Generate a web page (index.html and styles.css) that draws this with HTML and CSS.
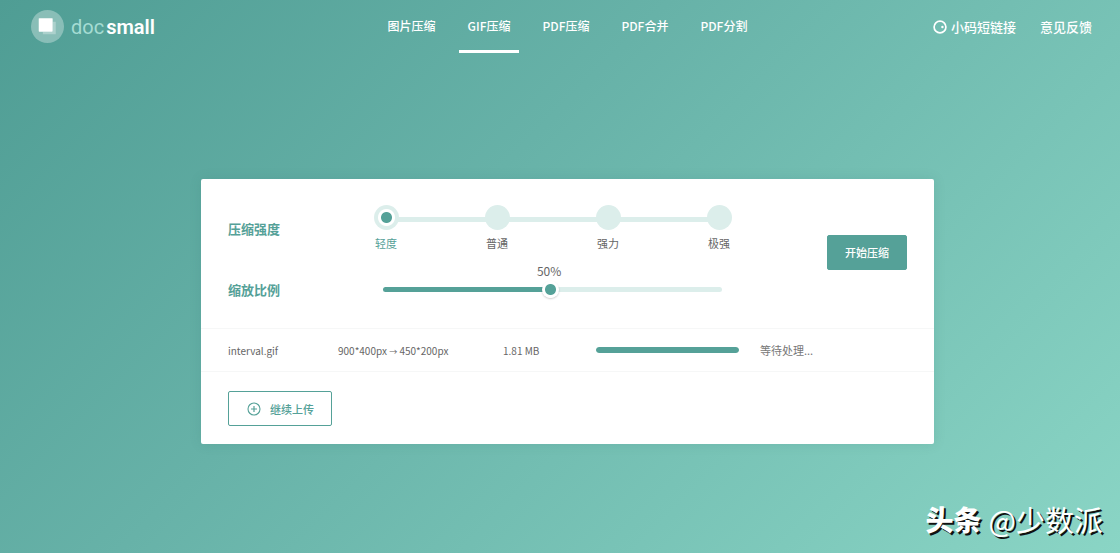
FILE: index.html
```html
<!DOCTYPE html>
<html lang="zh-CN">
<head>
<meta charset="utf-8">
<meta name="viewport" content="width=device-width, initial-scale=1">
<title>docsmall</title>
<link rel="stylesheet" href="styles.css">
</head>
<body class="page">
<header class="header">
  <a class="logo" href="#">
    <svg class="logo-mark" viewBox="0 0 32 32" aria-hidden="true">
      <circle cx="16" cy="16" r="16" fill="#fff" fill-opacity=".32"/>
      <path d="M21 11.500h3v12H11.500V21H21z" fill="#fff" fill-opacity=".3"/>
      <rect x="7.500" y="8" width="13.500" height="13" rx=".6" fill="#fff"/>
    </svg>
    <span class="logo-text"><span class="logo-doc">doc</span><span class="logo-small">small</span></span>
  </a>
  <nav class="nav">
    <a class="nav-link" href="#">图片压缩</a>
    <a class="nav-link nav-link-active" href="#" aria-current="page">GIF压缩</a>
    <a class="nav-link" href="#">PDF压缩</a>
    <a class="nav-link" href="#">PDF合并</a>
    <a class="nav-link" href="#">PDF分割</a>
  </nav>
  <div class="links">
    <a class="link" href="#">
      <svg class="link-icon" viewBox="0 0 14 14" aria-hidden="true">
        <circle cx="7" cy="7" r="5.900" fill="none" stroke="#fff" stroke-width="1.700"/>
        <circle cx="9.400" cy="7" r="1.200" fill="#fff"/>
      </svg>小码短链接</a>
    <a class="link" href="#">意见反馈</a>
  </div>
</header>
<main class="main">
  <section class="card">
    <form class="settings">
      <div class="fields">
        <span class="field-name" id="level-name">压缩强度</span>
        <div class="steps" role="radiogroup" aria-labelledby="level-name">
          <label class="step"><input class="step-dot" type="radio" name="level" checked><span class="step-text">轻度</span></label>
          <label class="step"><input class="step-dot" type="radio" name="level"><span class="step-text">普通</span></label>
          <label class="step"><input class="step-dot" type="radio" name="level"><span class="step-text">强力</span></label>
          <label class="step"><input class="step-dot" type="radio" name="level"><span class="step-text">极强</span></label>
        </div>
        <label class="field-name field-name-low" for="scale">缩放比例</label>
        <div class="scale">
          <output class="scale-value" for="scale">50%</output>
          <input class="range" id="scale" type="range" min="1" max="100" value="50">
        </div>
      </div>
      <button class="button button-main" type="button">开始压缩</button>
    </form>
    <table class="files">
      <colgroup><col class="col-name"><col class="col-size"><col class="col-weight"><col class="col-progress"><col></colgroup>
      <tbody>
        <tr>
          <td class="cell cell-first">interval.gif</td>
          <td class="cell">900*400px <span class="arrow">→</span> 450*200px</td>
          <td class="cell">1.81 MB</td>
          <td class="cell"><progress class="progress" value="100" max="100" aria-label="interval.gif"></progress></td>
          <td class="cell cell-state">等待处理...</td>
        </tr>
      </tbody>
    </table>
    <div class="footer">
      <button class="button button-outline" type="button">
        <svg class="plus" viewBox="0 0 14 14" aria-hidden="true">
          <path d="M7 4v6M4 7h6" stroke="currentColor" stroke-width="1.200" fill="none"/>
          <circle cx="7" cy="7" r="6" stroke="currentColor" stroke-width="1.100" fill="none"/>
        </svg>继续上传</button>
    </div>
  </section>
</main>
<div class="mark"><b class="mark-brand">头条</b><span>@少数派</span></div>
</body>
</html>
```
FILE: styles.css
```css
* { box-sizing: border-box; }

.page {
  --green: #55a198;
  --pale: #dceeeb;
  margin: 0;
  min-height: 100vh;
  position: relative;
  background: linear-gradient(135deg, #4f9d94 0%, #67b2a8 40%, #8ad5c5 100%);
  font-family: "Noto Sans CJK SC", sans-serif;
  font-size: 11px;
  color: #666;
}

.header {
  display: grid;
  grid-template-columns: 349fr auto 337fr;
  padding: 0 28px 0 31px;
  font-size: 13px;
  font-weight: 500;
}

.logo {
  display: flex;
  align-items: center;
  gap: 7px;
  justify-self: start;
  text-decoration: none;
  color: #fff;
}

.logo-mark { width: 33px; height: 33px; }

.logo-text {
  display: flex;
  gap: 2px;
  font: 600 20px/24px Roboto, sans-serif;
}

.logo-doc { font-weight: 400; color: #a5dcd3; }

.nav { display: flex; gap: 14px; font-size: 12px; }

.nav-link {
  padding: 16px 9px 14px;
  line-height: 20px;
  border-bottom: 3px solid transparent;
  color: #fff;
  text-decoration: none;
}

.nav-link-active { border-color: #fff; }

.links {
  display: flex;
  justify-content: flex-end;
  align-items: center;
  gap: 24px;
}

.link {
  display: flex;
  align-items: center;
  gap: 4px;
  color: #fff;
  line-height: 20px;
  text-decoration: none;
}

.link-icon { width: 14px; height: 14px; }

.main {
  display: grid;
  grid-template-columns: 201fr 733fr 186fr;
  padding: 126px 0 109px;
}

.card {
  grid-column: 2;
  background: #fff;
  border-radius: 2px;
  box-shadow: 0 0 12px rgba(50, 110, 100, .15);
}

.settings {
  display: flex;
  align-items: center;
  justify-content: space-between;
  padding: 26px 27px 29px;
}

.fields {
  display: grid;
  grid-template-columns: 145px 359px;
  row-gap: 9px;
  align-items: center;
}

.field-name {
  font-size: 13px;
  line-height: 18px;
  font-weight: 700;
  color: var(--green);
}

.field-name-low { align-self: end; }

.steps {
  display: flex;
  justify-content: space-between;
  background: linear-gradient(var(--pale), var(--pale)) center 12px / 330px 5px no-repeat;
}

.step {
  display: grid;
  justify-items: center;
  gap: 3px;
  width: 26px;
}

.step-dot {
  appearance: none;
  margin: 0;
  width: 25px;
  height: 25px;
  border-radius: 50%;
  background: var(--pale);
}

.step-dot:checked {
  background: radial-gradient(circle, var(--green) 5px, #fff 6px, #fff 8px, var(--pale) 9px);
}

.step-text { line-height: 20px; white-space: nowrap; }
.step-dot:checked + .step-text { color: var(--green); }

.scale {
  display: grid;
  padding: 0 10px;
}

.scale-value {
  width: 98%;
  text-align: center;
  font-size: 12px;
  line-height: 18px;
}

.range {
  appearance: none;
  margin: 0;
  width: 100%;
  height: 19px;
  background: none;
}

.range::-webkit-slider-runnable-track {
  height: 5px;
  border-radius: 3px;
  background: linear-gradient(90deg, var(--green) 49%, var(--pale) 49%);
}

.range::-webkit-slider-thumb {
  appearance: none;
  width: 17px;
  height: 17px;
  margin-top: -6px;
  border-radius: 50%;
  background: radial-gradient(circle, var(--green) 5px, #fff 6px);
  box-shadow: 0 1px 2px rgba(0, 0, 0, .2);
}

.button {
  display: flex;
  align-items: center;
  justify-content: center;
  height: 35px;
  border: 1px solid var(--green);
  border-radius: 2px;
  font: 500 11px/20px "Noto Sans CJK SC", sans-serif;
}

.button-main {
  padding: 0 17px;
  background: var(--green);
  color: #fff;
}

.button-outline {
  gap: 9px;
  padding: 0 17px 0 18px;
  background: #fff;
  color: var(--green);
}

.plus { width: 14px; height: 14px; }

.files {
  width: 100%;
  table-layout: fixed;
  border-collapse: collapse;
  border-top: 1px solid #f6f7f7;
  border-bottom: 1px solid #f6f7f7;
}

.col-name { width: 137px; }
.col-size { width: 165px; }
.col-weight { width: 93px; }
.col-progress { width: 164px; }

.cell {
  height: 43px;
  padding: 0;
  font-size: 10px;
  white-space: nowrap;
}

.cell-first { padding-left: 27px; }
.cell-state { font-size: 11px; color: #777; }
.arrow { font-size: 8px; }

.progress {
  display: block;
  appearance: none;
  width: 143px;
  height: 6px;
  border-radius: 3px;
  overflow: hidden;
}

.progress::-webkit-progress-bar { background: var(--pale); }
.progress::-webkit-progress-value { background: var(--green); border-radius: 3px; }

.footer { padding: 19px 27px 18px; }

.mark {
  position: absolute;
  right: 17px;
  bottom: 14px;
  display: flex;
  gap: 7px;
  font-size: 29px;
  line-height: 40px;
  color: #fff;
  text-shadow: 2px 2px 0 #111;
}

.mark-brand { font-size: 28px; font-weight: 900; }
```
